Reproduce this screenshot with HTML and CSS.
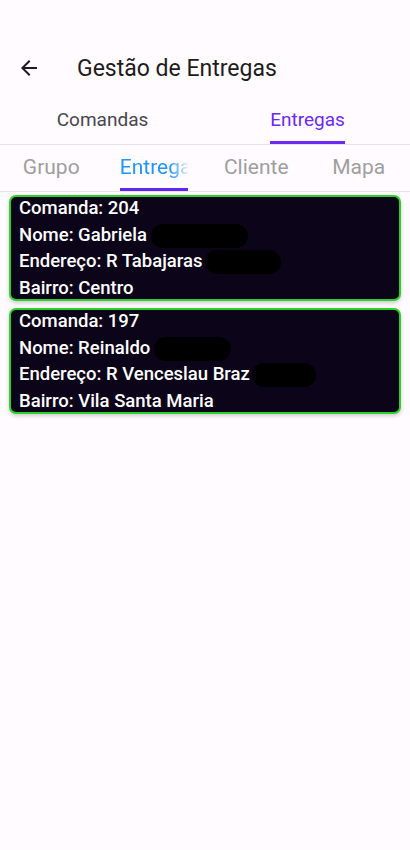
FILE: index.html
```html
<!DOCTYPE html>
<html lang="pt-BR">
<head>
  <meta charset="UTF-8">
  <meta name="viewport" content="width=device-width, initial-scale=1.0">
  <title>Gestão de Entregas</title>
  <link rel="stylesheet" href="styles.css">
</head>
<body>

  <div class="status-space"></div>

  <header class="app-bar">
    <button class="back-btn" type="button" aria-label="Voltar">
      <svg width="24" height="24" viewBox="0 0 24 24"><path d="M20 11H7.83l5.59-5.59L12 4l-8 8 8 8 1.41-1.41L7.83 13H20v-2z" fill="#1d1b20"/></svg>
    </button>
    <h1 class="title">Gestão de Entregas</h1>
  </header>

  <nav class="main-tabs">
    <div class="main-tab"><span class="main-label">Comandas</span></div>
    <div class="main-tab active"><span class="main-label">Entregas</span></div>
  </nav>

  <nav class="sub-tabs">
    <div class="sub-tab"><span class="sub-label">Grupo</span></div>
    <div class="sub-tab active"><span class="sub-label"><span class="fade">Entregas</span></span></div>
    <div class="sub-tab"><span class="sub-label">Cliente</span></div>
    <div class="sub-tab"><span class="sub-label">Mapa</span></div>
  </nav>

  <main class="list">
    <div class="card">
      <div class="line">Comanda: 204</div>
      <div class="line">Nome: Gabriela<span class="redact r1"></span></div>
      <div class="line">Endereço: R Tabajaras<span class="redact r2"></span></div>
      <div class="line">Bairro: Centro</div>
    </div>
    <div class="card">
      <div class="line">Comanda: 197</div>
      <div class="line">Nome: Reinaldo<span class="redact r3"></span></div>
      <div class="line">Endereço: R Venceslau Braz<span class="redact r4"></span></div>
      <div class="line">Bairro: Vila Santa Maria</div>
    </div>
  </main>

</body>
</html>
```

FILE: styles.css
```css
body {
  margin: 0;
  font-family: Roboto, "Noto Sans", sans-serif;
  background-color: #fffbfe;
  min-height: 850px;
}
.status-space {
  height: 40px;
}
.app-bar {
  height: 56px;
  display: flex;
  align-items: center;
}
.back-btn {
  background: none;
  border: none;
  padding: 0;
  margin-left: 17px;
  width: 24px;
  height: 24px;
  display: flex;
}
.title {
  margin: 0 0 0 36px;
  font-size: 23px;
  font-weight: 400;
  color: #1d1b20;
}
.main-tabs {
  display: flex;
  height: 48px;
  border-bottom: 1px solid #e8e1ea;
}
.main-tab {
  flex: 1;
  display: flex;
  justify-content: center;
}
.main-label {
  font-size: 19px;
  font-weight: 400;
  color: #49454f;
  display: flex;
  align-items: center;
  border-bottom: 3px solid transparent;
  padding-top: 1px;
}
.main-tab.active .main-label {
  color: #6a2af2;
  border-bottom-color: #6a2af2;
  border-radius: 3px 3px 0 0;
}
.sub-tabs {
  display: flex;
  height: 46px;
  border-bottom: 1px solid #e8e1ea;
}
.sub-tab {
  flex: 1;
  display: flex;
  justify-content: center;
}
.sub-label {
  font-size: 21px;
  color: #9e9e9e;
  display: flex;
  align-items: center;
  padding-top: 1px;
  border-bottom: 3px solid transparent;
}
.sub-tab.active .sub-label {
  color: #2196f3;
  width: 68px;
  overflow: hidden;
  white-space: nowrap;
  border-bottom-color: #5a26f0;
  border-radius: 3px 3px 0 0;
}
.fade {
  -webkit-mask-image: linear-gradient(to right, #000 50px, rgba(0,0,0,0.1) 68px);
  mask-image: linear-gradient(to right, #000 50px, rgba(0,0,0,0.1) 68px);
}
.list {
  padding: 3px 9px;
  display: flex;
  flex-direction: column;
  gap: 7px;
}
.card {
  background-color: #0c0419;
  border: 2px solid #2ad12a;
  border-radius: 7px;
  padding: 0 8px;
  box-shadow: 0 2px 4px rgba(0, 0, 0, 0.2);
}
.line {
  color: #ffffff;
  font-size: 18.5px;
  font-weight: 500;
  line-height: 26.5px;
  white-space: nowrap;
}
.line:first-child {
  margin-top: -2px;
}
.line:last-child {
  margin-bottom: -2px;
}
.redact {
  display: inline-block;
  vertical-align: middle;
  height: 24px;
  background-color: #000;
  border-radius: 12px;
}
.r1 { width: 97px; margin-left: 4px; }
.r2 { width: 76px; margin-left: 2px; }
.r3 { width: 77px; margin-left: 4px; }
.r4 { width: 64px; margin-left: 2px; }
```
